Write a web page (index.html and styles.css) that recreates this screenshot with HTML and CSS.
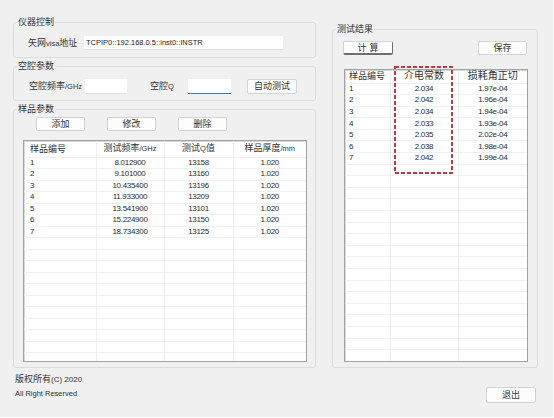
FILE: index.html
```html
<!doctype html>
<html lang="zh-CN">
  <head>
    <meta charset="utf-8">
    <title>介电常数测试</title>
    <link rel="stylesheet" href="styles.css">
  </head>
  <body>
    <div class="window">
      <div class="panes">
        <div class="col-left">
          <fieldset class="group g-instr">
            <legend>仪器控制</legend>
            <div class="row">
              <label class="lbl">矢网<small>visa</small>地址</label>
              <input class="field visa" value="TCPIP0::192.168.0.5::inst0::INSTR">
            </div>
          </fieldset>

          <fieldset class="group g-cavity">
            <legend>空腔参数</legend>
            <div class="row">
              <label class="lbl">空腔频率<small>/GHz</small></label>
              <input class="field short">
              <label class="lbl q-lbl">空腔<small>Q</small></label>
              <input class="field short focused">
              <button class="btn auto">自动测试</button>
            </div>
          </fieldset>

          <fieldset class="group g-sample">
            <legend>样品参数</legend>
            <div class="btn-row">
              <button class="btn">添加</button>
              <button class="btn">修改</button>
              <button class="btn">删除</button>
            </div>
            <div class="grid grid-samples">
              <table>
                <colgroup>
                  <col style="width: 72px">
                  <col style="width: 68px">
                  <col style="width: 69px">
                  <col>
                </colgroup>
                <thead>
                  <tr>
                    <th class="first">样品编号</th>
                    <th>测试频率<small>/GHz</small></th>
                    <th>测试<small>Q</small>值</th>
                    <th>样品厚度<small>/mm</small></th>
                  </tr>
                </thead>
                <tbody>
                  <tr><td class="first">1</td><td>8.012900</td><td>13158</td><td>1.020</td></tr>
                  <tr><td class="first">2</td><td>9.101000</td><td>13160</td><td>1.020</td></tr>
                  <tr><td class="first">3</td><td>10.435400</td><td>13196</td><td>1.020</td></tr>
                  <tr><td class="first">4</td><td>11.933000</td><td>13209</td><td>1.020</td></tr>
                  <tr><td class="first">5</td><td>13.541900</td><td>13101</td><td>1.020</td></tr>
                  <tr><td class="first">6</td><td>15.224900</td><td>13150</td><td>1.020</td></tr>
                  <tr><td class="first">7</td><td>18.734300</td><td>13125</td><td>1.020</td></tr>
                  <tr><td></td><td></td><td></td><td></td></tr>
                  <tr><td></td><td></td><td></td><td></td></tr>
                  <tr><td></td><td></td><td></td><td></td></tr>
                  <tr><td></td><td></td><td></td><td></td></tr>
                  <tr><td></td><td></td><td></td><td></td></tr>
                  <tr><td></td><td></td><td></td><td></td></tr>
                  <tr><td></td><td></td><td></td><td></td></tr>
                  <tr><td></td><td></td><td></td><td></td></tr>
                  <tr><td></td><td></td><td></td><td></td></tr>
                  <tr><td></td><td></td><td></td><td></td></tr>
                  <tr><td></td><td></td><td></td><td></td></tr>
                </tbody>
              </table>
            </div>
          </fieldset>
        </div>

        <fieldset class="group g-result">
          <legend>测试结果</legend>
          <div class="btn-row split">
            <button class="btn default calc">计算</button>
            <button class="btn">保存</button>
          </div>
          <div class="grid-wrap">
            <div class="grid grid-results">
              <table>
                <colgroup>
                  <col style="width: 45px">
                  <col style="width: 68px">
                  <col>
                </colgroup>
                <thead>
                  <tr>
                    <th class="first">样品编号</th>
                    <th>介电常数</th>
                    <th>损耗角正切</th>
                  </tr>
                </thead>
                <tbody>
                  <tr><td class="first">1</td><td>2.034</td><td>1.97e-04</td></tr>
                  <tr><td class="first">2</td><td>2.042</td><td>1.96e-04</td></tr>
                  <tr><td class="first">3</td><td>2.034</td><td>1.94e-04</td></tr>
                  <tr><td class="first">4</td><td>2.033</td><td>1.93e-04</td></tr>
                  <tr><td class="first">5</td><td>2.035</td><td>2.02e-04</td></tr>
                  <tr><td class="first">6</td><td>2.038</td><td>1.98e-04</td></tr>
                  <tr><td class="first">7</td><td>2.042</td><td>1.99e-04</td></tr>
                  <tr><td></td><td></td><td></td></tr>
                  <tr><td></td><td></td><td></td></tr>
                  <tr><td></td><td></td><td></td></tr>
                  <tr><td></td><td></td><td></td></tr>
                  <tr><td></td><td></td><td></td></tr>
                  <tr><td></td><td></td><td></td></tr>
                  <tr><td></td><td></td><td></td></tr>
                  <tr><td></td><td></td><td></td></tr>
                  <tr><td></td><td></td><td></td></tr>
                  <tr><td></td><td></td><td></td></tr>
                  <tr><td></td><td></td><td></td></tr>
                  <tr><td></td><td></td><td></td></tr>
                  <tr><td></td><td></td><td></td></tr>
                  <tr><td></td><td></td><td></td></tr>
                  <tr><td></td><td></td><td></td></tr>
                  <tr><td></td><td></td><td></td></tr>
                  <tr><td></td><td></td><td></td></tr>
                </tbody>
              </table>
            </div>
            <!-- highlight around the permittivity column -->
            <svg class="mark" width="59" height="108" viewBox="0 0 59 108">
              <rect x="1" y="1" width="57" height="106" fill="none" stroke="#bf3a40" stroke-width="2" stroke-dasharray="4 2"/>
            </svg>
          </div>
        </fieldset>
      </div>

      <footer class="footer">
        <div class="copy">
          <p class="c1">版权所有<span>(C) 2020</span></p>
          <p class="c2">All Right Reserved</p>
        </div>
        <button class="btn exit">退出</button>
      </footer>
    </div>
  </body>
</html>
```

FILE: styles.css
```css
* {
  box-sizing: border-box;
}

html,
body {
  margin: 0;
  background: #fff;
}

body {
  font-family: "Liberation Sans", "Noto Sans CJK SC", sans-serif;
  font-size: 9px;
  color: #333;
}

small {
  font-size: 7.5px;
}

.window {
  width: 553px;
  height: 417px;
  background: #f0f0f0;
  padding: 16px 0 0 13px;
  display: flex;
  flex-direction: column;
}

.panes {
  display: flex;
  align-items: flex-start;
  gap: 16px;
}

.col-left {
  width: 303px;
  display: flex;
  flex-direction: column;
  gap: 2px;
}

/* group boxes: horizontal insets live on the children so the
   legend stays tucked into the corner */
.group {
  margin: 0;
  min-width: 0;
  border: 1px solid #dcdcdc;
  border-radius: 3px;
  padding: 0;
}

.group legend {
  margin-left: 3px;
  padding: 0 1px;
  font-size: 9px;
  line-height: 12px;
  color: #333;
}

.g-instr {
  padding: 7px 0 6px;
}

.g-instr .row {
  padding-left: 14px;
}

.g-cavity {
  padding: 6px 0;
}

.g-cavity .row {
  padding-left: 15px;
}

.g-sample {
  padding: 2px 0 5px;
}

.g-result {
  width: 206px;
  margin-top: 7px;
  padding: 6px 0 5px;
}

.row {
  display: flex;
  align-items: center;
  height: 16px;
}

.lbl {
  width: 56px;
  flex: none;
  white-space: nowrap;
  line-height: 12px;
}

.q-lbl {
  width: 38px;
  margin-left: 23px;
}

/* inputs */
.field {
  height: 14px;
  border: 0;
  border-bottom: 1px solid #e2e2e2;
  background: #fff;
  padding: 0 2px;
  font-family: "Liberation Sans", sans-serif;
  font-size: 7.5px;
  color: #222;
  outline: none;
}

.visa {
  width: 199px;
}

.short {
  width: 42px;
  height: 15px;
}

.focused {
  width: 43px;
  background: #fff;
  border-bottom: 1px solid #3d78bf;
}

/* buttons */
.btn {
  width: 49px;
  height: 14px;
  padding: 0;
  border: 1px solid #d4d4d4;
  border-radius: 2px;
  background: #fdfdfd;
  font-family: "Noto Sans CJK SC", sans-serif;
  font-size: 9px;
  line-height: 12px;
  color: #333;
}

.auto {
  width: 50px;
  height: 15px;
  margin-left: 16px;
}

.default {
  border-right-color: #6f6f6f;
  border-bottom: 2px solid #6f6f6f;
}

.calc {
  width: 50px;
  letter-spacing: 3px;
  text-indent: 3px;
}

.btn-row {
  display: flex;
  gap: 22px;
  padding-left: 22px;
}

.btn-row.split {
  justify-content: space-between;
  padding: 0 10px;
}

/* data grids */
.grid {
  margin: 9px 8px 0 9px;
  background: #fff;
  border: 1px solid #a2a2a2;
  box-shadow: inset 1px 1px 0 #d8d8d8;
  overflow: hidden;
}

.grid-samples {
  height: 222px;
}

.grid-wrap {
  position: relative;
  margin: 14px 9px 0 11px;
}

.grid-results {
  margin: 0;
  height: 293px;
}

.mark {
  position: absolute;
  left: 50px;
  top: -3px;
}

table {
  width: 100%;
  table-layout: fixed;
  border-collapse: collapse;
}

th,
td {
  padding: 0;
  text-align: center;
  white-space: nowrap;
  border-left: 1px solid #edeeee;
  border-bottom: 1px solid #eef1f2;
}

th {
  height: 16px;
  font-weight: normal;
  font-size: 9px;
  line-height: 12px;
  color: #333;
}

td {
  height: 11.5px;
  font-size: 8px;
  line-height: 10px;
  letter-spacing: -0.3px;
  color: #2b2b2b;
}

th.first,
td.first {
  text-align: left;
  padding-left: 6px;
}

th:first-child,
td:first-child {
  border-left: 0;
}

.grid-results th {
  height: 13px;
  font-size: 10px;
}

.grid-results th.first {
  font-size: 9px;
}

.grid-results td {
  height: 11.6px;
}

.grid-results th.first,
.grid-results td.first {
  padding-left: 4px;
}

/* footer */
.footer {
  display: flex;
  justify-content: space-between;
  margin-top: 4px;
  padding: 0 17px 0 2px;
}

.copy p {
  margin: 0;
  line-height: 14px;
}

.c1 {
  font-size: 9px;
}

.c1 span {
  font-size: 8px;
}

.c2 {
  font-size: 7.5px;
}

.exit {
  width: 50px;
  height: 16px;
  margin-top: 15px;
}
```
